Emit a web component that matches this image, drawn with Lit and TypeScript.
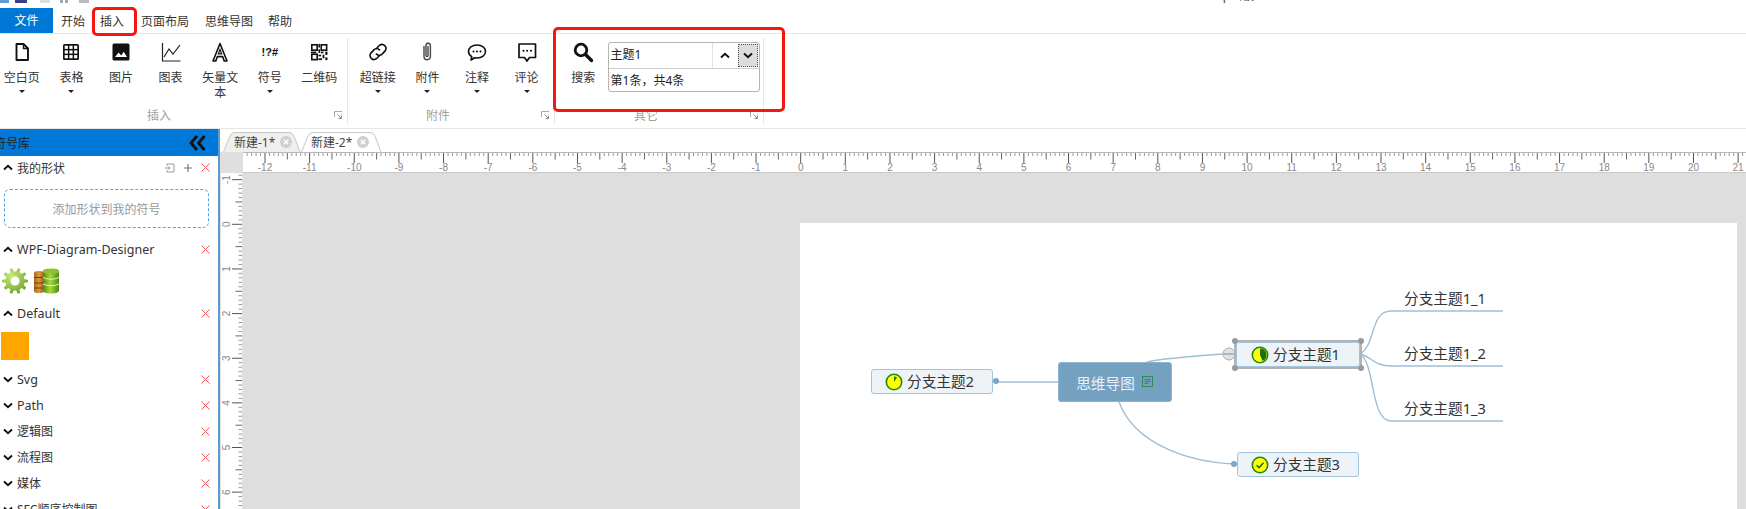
import { LitElement, html, css, svg } from "lit";
import { customElement } from "lit/decorators.js";

const ICONS: Record<string, unknown> = {
  page: svg`<path d="M6.500 4h7l4.500 4.500V20H6.500z" fill="none" stroke="#111" stroke-width="1.900" stroke-linejoin="round"/><path d="M13.500 4v4.500H18" fill="none" stroke="#111" stroke-width="1.400"/>`,
  table: svg`<rect x="4" y="4" width="16" height="16" rx="1.500" fill="#111"/><g fill="#fff"><rect x="5.700" y="5.700" width="3.200" height="3.200"/><rect x="10.400" y="5.700" width="3.200" height="3.200"/><rect x="15.100" y="5.700" width="3.200" height="3.200"/><rect x="5.700" y="10.400" width="3.200" height="3.200"/><rect x="10.400" y="10.400" width="3.200" height="3.200"/><rect x="15.100" y="10.400" width="3.200" height="3.200"/><rect x="5.700" y="15.100" width="3.200" height="3.200"/><rect x="10.400" y="15.100" width="3.200" height="3.200"/><rect x="15.100" y="15.100" width="3.200" height="3.200"/></g>`,
  image: svg`<rect x="3.500" y="3.500" width="17" height="17" rx="1.500" fill="#111"/><path d="M6 17l3.600-4.600 2.600 3 2.600-3.600L18 17z" fill="#fff"/>`,
  chart: svg`<path d="M3.500 3v18h18" fill="none" stroke="#222" stroke-width="1.200"/><path d="M5 17l5-8 4 5 7-9" fill="none" stroke="#222" stroke-width="1.200"/>`,
  vector: svg`<path d="M12 3.500L5 21h2.800l1.600-4.400h5.200L16.200 21H19z" fill="none" stroke="#111" stroke-width="1.600" stroke-linejoin="round"/><path d="M10.400 13.800L12 9.400l1.600 4.400z" fill="none" stroke="#111" stroke-width="1.200"/>`,
  qr: svg`<g transform="translate(1.200 1.200) scale(.9)"><g fill="none" stroke="#111" stroke-width="1.800"><rect x="4" y="4" width="6" height="6"/><rect x="14.500" y="4" width="6" height="6"/><rect x="4" y="14.500" width="6" height="6"/></g><g fill="#111"><rect x="11.400" y="3" width="1.800" height="4"/><rect x="11.400" y="9" width="1.800" height="4"/><rect x="3" y="11.600" width="6" height="1.800"/><rect x="14" y="11.600" width="3" height="1.800"/><rect x="19" y="11.600" width="2.400" height="3.600"/><rect x="11.400" y="15" width="3" height="1.800"/><rect x="16" y="15" width="2" height="4"/><rect x="11.400" y="19" width="4" height="2"/><rect x="19" y="18" width="2.400" height="3"/></g></g>`,
  link: svg`<g fill="none" stroke="#111" stroke-width="1.600" stroke-linecap="round"><path d="M10.500 8.500l3-3.200a4 4 0 0 1 5.600 5.600l-3 3.200a4 4 0 0 1-5.600 0"/><path d="M13.500 15.500l-3 3.200a4 4 0 0 1-5.600-5.600l3-3.200a4 4 0 0 1 5.600 0"/></g>`,
  clip: svg`<path d="M9 7v10a3.200 3.200 0 0 0 6.400 0V6a2.200 2.200 0 0 0-4.400 0v10a1 1 0 0 0 2 0V7" transform="translate(0 -0.5)" fill="none" stroke="#444" stroke-width="1.400" stroke-linecap="round"/>`,
  note: svg`<path d="M12 5c5 0 8.500 2.800 8.500 6.500S17 18 12 18c-.8 0-1.600-.1-2.300-.2L6 20l.8-3.400C4.700 15.400 3.500 13.600 3.500 11.500 3.500 7.800 7 5 12 5z" fill="none" stroke="#111" stroke-width="1.600" stroke-linejoin="round"/><circle cx="8.500" cy="11.500" r="1"/><circle cx="12" cy="11.500" r="1"/><circle cx="15.500" cy="11.500" r="1"/>`,
  comment: svg`<path d="M4 4h16.500v13.500h-6L12 21l-2.500-3.500H4z" fill="none" stroke="#111" stroke-width="1.700" stroke-linejoin="round"/><circle cx="8.500" cy="10.800" r="1"/><circle cx="12.200" cy="10.800" r="1"/><circle cx="16" cy="10.800" r="1"/>`,
  search: svg`<circle cx="10" cy="10" r="5.800" fill="none" stroke="#111" stroke-width="2.800"/><path d="M14.500 14.500L20.500 20.500" stroke="#111" stroke-width="3.400" stroke-linecap="round"/>`,
};

const icon = (name: string) => html`<svg class="ico" viewBox="0 0 24 24">${ICONS[name]}</svg>`;

const chevron = (up: boolean) =>
  html`<svg class="chev" viewBox="0 0 10 7"><path d=${up ? "M1 5.500L5 1.800L9 5.500" : "M1 1.500L5 5.200L9 1.500"} fill="none" stroke="#111" stroke-width="1.900"/></svg>`;

const redX = html`<svg class="rx" viewBox="0 0 10 10"><path d="M.5 .5L9.500 9.500M9.500 .5L.5 9.500" stroke="#f4555f" stroke-width="1.100"/></svg>`;

const launcher = html`<svg class="launch" viewBox="0 0 9 9"><path d="M.5 6V.5H8" fill="none" stroke="#aaa"/><path d="M3.500 3.500L7 7M7.500 4.500V7.500H4.500" fill="none" stroke="#888"/></svg>`;

const UNIT = 44.64;

function gearPath() {
  const teeth = 10;
  const pts: string[] = [];
  for (let i = 0; i < teeth; i++) {
    const a = (i / teeth) * Math.PI * 2;
    const step = (Math.PI * 2) / teeth;
    const corners: [number, number][] = [
      [a - step * 0.3, 9.6],
      [a - step * 0.16, 13],
      [a + step * 0.16, 13],
      [a + step * 0.3, 9.6],
    ];
    for (const [t, r] of corners) pts.push(`${(13 + r * Math.cos(t)).toFixed(2)} ${(13 + r * Math.sin(t)).toFixed(2)}`);
  }
  return "M" + pts.join("L") + "Z";
}

function hRuler() {
  const W = 1503;
  const marks = [];
  for (let i = -140; i <= 230; i++) {
    const x = 22 + ((i + 120) * UNIT) / 10;
    if (x < 0 || x > W) continue;
    const main = i % 10 === 0;
    const half = !main && i % 5 === 0;
    const y2 = main ? 11 : half ? 7.5 : 4;
    const c = main ? "#555" : half ? "#666" : "#999";
    marks.push(svg`<line x1=${x} x2=${x} y1="1" y2=${y2} stroke=${c} stroke-width="1"/>`);
    if (main) marks.push(svg`<text x=${x} y="19" class="rt" text-anchor="middle">${i / 10}</text>`);
  }
  return html`<svg class="hr" width=${W} height="21" viewBox="0 0 ${W} 21">
    <line x1="0" x2=${W} y1=".5" y2=".5" stroke="#b8b8b8"/>
    <line x1="0" x2=${W} y1="20.500" y2="20.500" stroke="#c9c9c9"/>
    ${marks}
  </svg>`;
}

function vRuler() {
  const H = 337;
  const marks = [];
  for (let i = -20; i <= 80; i++) {
    const y = 51.3 + (i * UNIT) / 10;
    if (y < 0 || y > H) continue;
    const main = i % 10 === 0;
    const half = !main && i % 5 === 0;
    const x1 = main ? 11 : half ? 14.5 : 17.5;
    const c = main ? "#555" : half ? "#666" : "#999";
    marks.push(svg`<line x1=${x1} x2="21" y1=${y} y2=${y} stroke=${c} stroke-width="1"/>`);
    if (main) marks.push(svg`<text class="rt" text-anchor="middle" transform="translate(9 ${y}) rotate(-90)">${i / 10}</text>`);
  }
  return html`<svg class="vr" width="21" height=${H} viewBox="0 0 21 ${H}">${marks}</svg>`;
}

const progress = (kind: string) => html`<svg class="prog" viewBox="0 0 18 18">
  <circle cx="9" cy="9" r="7.700" fill="#ffff00" stroke="#1f8a12" stroke-width="1.600"/>
  ${kind === "low" ? svg`<path d="M9 9V3.500A5.500 5.500 0 0 1 12 4.400z" fill="#1f7a12"/>` : ""}
  ${kind === "mid" ? svg`<path d="M9 9V2.600A6.400 6.400 0 0 1 11.500 14.900z" fill="#1f6a12"/>` : ""}
  ${kind === "done" ? svg`<path d="M5.500 9.300L8 11.600L12.600 6.800" fill="none" stroke="#1f6a12" stroke-width="1.500"/>` : ""}
</svg>`;

/* Map nodes: positions on the free page canvas (page origin = 800,223). */
const OX = 800;
const OY = 223;
const NODES = [
  { t: "分支主题2", p: "low", x: 871, y: 369, w: 122, h: 25 },
  { t: "分支主题1", p: "mid", x: 1236, y: 342, w: 124, h: 25 },
  { t: "分支主题3", p: "done", x: 1237, y: 452, w: 122, h: 25 },
];
const LEAVES = [
  { t: "分支主题1_1", y: 311 },
  { t: "分支主题1_2", y: 366 },
  { t: "分支主题1_3", y: 421 },
];

const at = (x: number, y: number, w?: number, h?: number) =>
  `left:${x - OX}px;top:${y - OY}px;` + (w ? `width:${w}px;` : "") + (h ? `height:${h}px;` : "");

@customElement("app-root")
export class AppRoot extends LitElement {
  static styles = css`
    :host {
      display: block;
      position: relative;
      width: 1746px;
      height: 509px;
      overflow: hidden;
      background: #fff;
      color: #333;
      font-family: "Noto Sans", "Noto Sans CJK SC", sans-serif;
      font-size: 12px;
    }
    .titlebar { height: 8px; position: relative; overflow: hidden; display: flex; }
    .qa { display: flex; height: 3px; }
    .qa i { display: block; height: 3px; }
    .q1 { width: 9px; background: #5a9ed8; }
    .q2 { width: 12px; margin-left: 6px; background: #3c3c8c; }
    .q3 { width: 10px; margin-left: 13px; background: #ddd; }
    .q4 { width: 3px; margin-left: 10px; background: #9ab; }
    .q5 { width: 3px; margin-left: 2px; background: #9ab; }
    .q6 { width: 10px; margin-left: 11px; background: #bbb; }
    .wintitle {
      position: absolute;
      left: 1176px;
      top: -13px;
      line-height: 17px;
      font-size: 12px;
      color: #444;
      white-space: nowrap;
    }
    .menu {
      height: 25px;
      display: flex;
      align-items: center;
      border-bottom: 1px solid #e6e6e6;
    }
    .file {
      width: 53px;
      height: 25px;
      line-height: 25px;
      background: #0078d7;
      color: #fff;
      text-align: center;
      margin-right: 8px;
    }
    .menu span { white-space: nowrap; }
    .m1 { width: 39px; }
    .m2 { width: 41px; }
    .m3 { width: 64px; }
    .m4 { width: 63px; }
    .ribbon {
      height: 94px;
      display: flex;
      margin-left: -3px;
      border-bottom: 1px solid #e6e6e6;
    }
    .group {
      display: flex;
      flex-direction: column;
      margin-top: 4px;
      margin-bottom: 4px;
      border-right: 1px solid #e6e6e6;
    }
    .g1 { width: 350px; }
    .g2 { width: 206px; }
    .g3 { width: 208px; }
    .btns { flex: 1; display: flex; }
    .g2 .btns { padding-left: 5px; }
    .g3 .btns { padding-left: 4px; }
    .btn {
      width: 49.6px;
      display: flex;
      flex-direction: column;
      align-items: center;
      padding-top: 2px;
    }
    .g3 .btn { width: 48.6px; }
    .ico { width: 24px; height: 24px; flex: none; display: block; }
    .sym {
      height: 24px;
      line-height: 24px;
      font-weight: 700;
      font-size: 11px;
      color: #111;
      font-family: "Liberation Sans", sans-serif;
    }
    .lbl {
      margin-top: 6px;
      width: 38px;
      text-align: center;
      line-height: 15px;
      color: #333;
    }
    .arrow {
      margin-top: 5px;
      width: 0;
      height: 0;
      border-left: 3px solid transparent;
      border-right: 3px solid transparent;
      border-top: 3px solid #222;
    }
    .glabel { height: 16px; display: flex; align-items: center; padding-right: 4px; color: #a0a0a0; margin-bottom: 1px; }
    .glabel b { flex: 1; font-weight: 400; text-align: center; padding-right: 13px; }
    .launch { width: 9px; height: 9px; }
    .search {
      width: 152px;
      height: 50px;
      margin: 4px 0 0 0;
      border: 1px solid #b5b5b5;
      border-radius: 3px;
      box-sizing: border-box;
      display: flex;
      flex-direction: column;
    }
    .s-top { height: 25px; display: flex; border-bottom: 1px solid #cfcfcf; flex: none; }
    .s-input { flex: 1; border-right: 1px solid #e2e2e2; padding-left: 2px; line-height: 24px; color: #222; }
    .s-up { width: 25px; display: flex; align-items: center; justify-content: center; }
    .s-down {
      width: 20px;
      margin: 1px 1px 1px 0;
      background: #dcdcdc;
      border: 1px dotted #555;
      box-sizing: border-box;
      display: flex;
      align-items: center;
      justify-content: center;
    }
    .s-res { padding-left: 2px; line-height: 24px; color: #222; }
    .chev { width: 10px; height: 7px; display: block; flex: none; }
    .main { display: flex; height: 381px; }
    .side {
      width: 218px;
      flex: none;
      border-right: 2px solid #5b9bd5;
      overflow: hidden;
    }
    .side-h {
      height: 27px;
      background: #0078d7;
      display: flex;
      align-items: center;
      justify-content: space-between;
      padding-right: 12px;
      color: #222;
    }
    .side-h span { margin-left: -6px; }
    .dbl { width: 17px; height: 16px; display: block; }
    .row {
      height: 26px;
      display: flex;
      align-items: center;
      padding: 0 8px 0 3px;
      gap: 4px;
      color: #333;
    }
    .row.first { height: 23px; }
    .row b { flex: 1; font-weight: 400; white-space: nowrap; }
    .row b.lat { font-size: 12.5px; }
    .rx { width: 9px; height: 9px; display: block; }
    .act { display: flex; align-items: center; gap: 8px; margin-right: 4px; }
    .act svg { display: block; width: 10px; height: 10px; }
    .drop {
      margin: 10px 9px 8px 4px;
      height: 37px;
      border: 1px dashed #4ea4ea;
      border-radius: 6px;
      color: #999;
      display: flex;
      align-items: center;
      justify-content: center;
    }
    .shapes { height: 38px; display: flex; align-items: center; gap: 6px; padding-left: 2px; }
    .shapes svg { display: block; }
    .swatch-wrap { padding: 6px 0; }
    .swatch { width: 28px; height: 28px; background: #ffa500; margin-left: 1px; }
    .work { flex: 1; min-width: 0; display: flex; flex-direction: column; }
    .tabs { height: 23px; display: flex; align-items: flex-end; padding-left: 3px; flex: none; }
    .tab {
      position: relative;
      z-index: 0;
      height: 20px;
      width: 78px;
      display: flex;
      align-items: center;
      gap: 5px;
      padding-left: 11px;
      box-sizing: border-box;
      color: #444;
      white-space: nowrap;
    }
    .tab.t2 { width: 81px; padding-left: 10px; }
    .tab-bg { position: absolute; left: 0; top: 0; z-index: -1; }
    .tx { width: 12px; height: 12px; display: block; flex: none; }
    .rulers { display: flex; height: 21px; flex: none; background: #fff; }
    .corner { width: 23px; background: #dfdfdf; flex: none; }
    .hr { display: block; flex: none; }
    .rt { font-size: 10px; fill: #888; font-family: "Liberation Sans", sans-serif; }
    .lower { flex: 1; min-height: 0; display: flex; }
    .vwrap { width: 23px; flex: none; background: #dfdfdf; display: flex; justify-content: flex-end; overflow: hidden; }
    .vr { display: block; background: #fff; flex: none; margin-right: 1px; }
    .canvas { flex: 1; position: relative; background: #dedede; overflow: hidden; }
    .paper { position: absolute; left: 557px; top: 50px; width: 937px; height: 400px; background: #fff; }
    .links { position: absolute; left: 0; top: 0; }
    .node {
      position: absolute;
      box-sizing: border-box;
      display: flex;
      align-items: center;
      justify-content: center;
      gap: 4px;
      padding: 0 5px 2px 0;
      background: #eef3f7;
      border: 1px solid #a3c3da;
      border-radius: 3px;
      font-size: 14.67px;
      color: #333;
      white-space: nowrap;
    }
    .prog { width: 18px; height: 18px; display: block; flex: none; position: relative; top: 1px; }
    .root {
      position: absolute;
      box-sizing: border-box;
      display: flex;
      align-items: center;
      justify-content: center;
      gap: 7px;
      background: #75a1c0;
      border: 1px solid #8fb4ce;
      border-radius: 3px;
      color: #e8f1f7;
      font-size: 14.67px;
      white-space: nowrap;
    }
    .notei { width: 12px; height: 12px; display: block; }
    .leaf {
      position: absolute;
      font-size: 14.67px;
      line-height: 20px;
      color: #333;
      white-space: nowrap;
    }
    .sel {
      position: absolute;
      box-sizing: border-box;
      border: 2px solid #b2b2b2;
    }
    .h {
      position: absolute;
      width: 6px;
      height: 6px;
      border-radius: 50%;
      background: #999;
    }
    .h.tl { left: -4px; top: -4px; }
    .h.tr { right: -4px; top: -4px; }
    .h.bl { left: -4px; bottom: -4px; }
    .h.br { right: -4px; bottom: -4px; }
    .mark {
      position: absolute;
      box-sizing: border-box;
      border: 3px solid #f5170f;
      border-radius: 5px;
      pointer-events: none;
    }
    .mark.a { left: 92px; top: 7px; width: 45px; height: 29px; }
    .mark.b { left: 553px; top: 27px; width: 232px; height: 85px; }
  `;

  private rbtn(ic: string, label: string, arrow = false) {
    return html`<div class="btn">
      ${ic === "sym" ? html`<div class="sym">!?#</div>` : icon(ic)}
      <div class="lbl">${label}</div>
      ${arrow ? html`<div class="arrow"></div>` : ""}
    </div>`;
  }

  private row(title: string, open: boolean, latin = false) {
    return html`<div class="row">${chevron(open)}<b class=${latin ? "lat" : ""}>${title}</b>${redX}</div>`;
  }

  private tab(label: string, cls: string, w: number, fill: string) {
    return html`<div class="tab ${cls}">
      <svg class="tab-bg" width=${w} height="20" viewBox="0 0 ${w} 20">
        <path d="M.5 20L7 4Q8.500 .5 12 .5H${w - 12}Q${w - 8.5} .5 ${w - 7} 4L${w - 1} 20" fill=${fill} stroke="#c6c6c6"/>
      </svg>
      <span>${label}</span>
      <svg class="tx" viewBox="0 0 12 12"><circle cx="6" cy="6" r="6" fill="#cfcfcf"/><path d="M3.800 3.800L8.200 8.200M8.200 3.800L3.800 8.200" stroke="#fff" stroke-width="1.500"/></svg>
    </div>`;
  }

  render() {
    const P = (x: number, y: number) => `${x - OX} ${y - OY}`;
    return html`
      <div class="titlebar">
        <div class="qa"><i class="q1"></i><i class="q2"></i><i class="q3"></i><i class="q4"></i><i class="q5"></i><i class="q6"></i></div>
        <div class="wintitle">Mindmap画板</div>
      </div>
      <div class="menu">
        <div class="file">文件</div>
        <span class="m1">开始</span><span class="m2">插入</span><span class="m3">页面布局</span><span class="m4">思维导图</span><span>帮助</span>
      </div>
      <div class="ribbon">
        <div class="group g1">
          <div class="btns">
            ${this.rbtn("page", "空白页", true)}
            ${this.rbtn("table", "表格", true)}
            ${this.rbtn("image", "图片")}
            ${this.rbtn("chart", "图表")}
            ${this.rbtn("vector", "矢量文本")}
            ${this.rbtn("sym", "符号", true)}
            ${this.rbtn("qr", "二维码")}
          </div>
          <div class="glabel"><b>插入</b>${launcher}</div>
        </div>
        <div class="group g2">
          <div class="btns">
            ${this.rbtn("link", "超链接", true)}
            ${this.rbtn("clip", "附件", true)}
            ${this.rbtn("note", "注释", true)}
            ${this.rbtn("comment", "评论", true)}
          </div>
          <div class="glabel"><b>附件</b>${launcher}</div>
        </div>
        <div class="group g3">
          <div class="btns">
            ${this.rbtn("search", "搜索")}
            <div class="search">
              <div class="s-top">
                <div class="s-input">主题1</div>
                <div class="s-up">${chevron(true)}</div>
                <div class="s-down">${chevron(false)}</div>
              </div>
              <div class="s-res">第1条，共4条</div>
            </div>
          </div>
          <div class="glabel"><b>其它</b>${launcher}</div>
        </div>
      </div>
      <div class="main">
        <div class="side">
          <div class="side-h">
            <span>符号库</span>
            <svg class="dbl" viewBox="0 0 17 16"><path d="M8 1L2 8l6 7M15.500 1L9.500 8l6 7" fill="none" stroke="#111" stroke-width="2.800"/></svg>
          </div>
          <div class="row first">
            ${chevron(true)}<b>我的形状</b>
            <div class="act">
              <svg viewBox="0 0 10 10"><path d="M2 3V1h7v8H2V7M0 5h5M3.500 3.500L5.200 5L3.500 6.500" fill="none" stroke="#999"/></svg>
              <svg viewBox="0 0 10 10"><path d="M5 1v8M1 5h8" stroke="#777" stroke-width="1.200"/></svg>
            </div>
            ${redX}
          </div>
          <div class="drop">添加形状到我的符号</div>
          ${this.row("WPF-Diagram-Designer", true, true)}
          <div class="shapes">
            <svg width="26" height="26" viewBox="0 0 26 26">
              <defs>
                <radialGradient id="gg" cx="35%" cy="30%" r="85%"><stop offset="0" stop-color="#cdea78"/><stop offset="1" stop-color="#5f9a28"/></radialGradient>
                <linearGradient id="dbg" x1="0" x2="1" y1="0" y2="0"><stop offset="0" stop-color="#4f8c14"/><stop offset=".45" stop-color="#a9d83c"/><stop offset="1" stop-color="#4e8a14"/></linearGradient>
                <linearGradient id="dbo" x1="0" x2="1" y1="0" y2="0"><stop offset="0" stop-color="#a8661c"/><stop offset=".5" stop-color="#dd9a42"/><stop offset="1" stop-color="#9a5c16"/></linearGradient>
              </defs>
              <path d=${gearPath()} fill="url(#gg)"/>
              <circle cx="13" cy="13" r="4.500" fill="#fff"/>
            </svg>
            <svg width="26" height="26" viewBox="0 0 26 26">
              <path d="M0 5q0-2 5-2t5 2v18q0 2-5 2t-5-2z" fill="url(#dbo)"/>
              <path d="M0 9.500h10M0 15h10M0 20h10" stroke="#6e400c" stroke-width="1.200"/>
              <path d="M9 3.500q0-3 8-3t8 3v19q0 3-8 3t-8-3z" fill="url(#dbg)"/>
              <ellipse cx="17" cy="3.500" rx="8" ry="2.500" fill="#8cc22e"/>
              <path d="M9 9.500q8 3.500 16 0M9 16q8 3.500 16 0" fill="none" stroke="#e4f4b0" stroke-width="1"/>
            </svg>
          </div>
          ${this.row("Default", true, true)}
          <div class="swatch-wrap"><div class="swatch"></div></div>
          ${[
            ["Svg", true],
            ["Path", true],
            ["逻辑图", false],
            ["流程图", false],
            ["媒体", false],
            ["SFC顺序控制图", false],
          ].map(([t, l]) => this.row(t as string, false, l as boolean))}
        </div>
        <div class="work">
          <div class="tabs">
            ${this.tab("新建-1*", "t1", 78, "#efefef")}
            ${this.tab("新建-2*", "t2", 81, "#ffffff")}
          </div>
          <div class="rulers"><div class="corner"></div>${hRuler()}</div>
          <div class="lower">
            <div class="vwrap">${vRuler()}</div>
            <div class="canvas">
              <div class="paper">
                <svg class="links" width="937" height="400" viewBox="0 0 937 400">
                  <g fill="none" stroke="#a0bfd6" stroke-width="1.400">
                    <path d="M${P(996, 382)}H${258}"/>
                    <path d="M${P(1147, 362)}C${P(1165, 358)} ${P(1195, 356)} ${P(1223, 354)}"/>
                    <path d="M${P(1119, 402)}C${P(1135, 445)} ${P(1190, 462)} ${P(1234, 464)}"/>
                    <path d="M${P(1360, 354)}C${P(1376, 345)} ${P(1370, 311)} ${P(1391, 311)}H${703}"/>
                    <path d="M${P(1360, 354)}C${P(1372, 357)} ${P(1374, 366)} ${P(1391, 366)}H${703}"/>
                    <path d="M${P(1360, 354)}C${P(1376, 365)} ${P(1370, 421)} ${P(1391, 421)}H${703}"/>
                  </g>
                  <circle cx=${996 - OX} cy=${381 - OY} r="3" fill="#7ba6c6"/>
                  <circle cx=${1234 - OX} cy=${464 - OY} r="3" fill="#7ba6c6"/>
                  <circle cx=${1229 - OX} cy=${354 - OY} r="6" fill="#e2e2e2" stroke="#aaa"/>
                  <path d="M${P(1224, 354)}h10" stroke="#888"/>
                </svg>
                <div class="root" style=${at(1058, 362, 114, 40)}>
                  <span>思维导图</span>
                  <svg class="notei" viewBox="0 0 12 12"><rect x=".5" y=".5" width="10" height="10" fill="none" stroke="#2e8b57"/><path d="M2.500 3.500h6M2.500 5.500h6M2.500 7.500h4" stroke="#2e8b57"/></svg>
                </div>
                <div class="sel" style=${at(1234, 340, 128, 29)}>
                  <i class="h tl"></i><i class="h tr"></i><i class="h bl"></i><i class="h br"></i>
                </div>
                ${NODES.map(
                  (n) => html`<div class="node" style=${at(n.x, n.y, n.w, n.h)}>${progress(n.p)}<span>${n.t}</span></div>`
                )}
                ${LEAVES.map((l) => html`<div class="leaf" style=${at(1404, l.y - 23)}>${l.t}</div>`)}
              </div>
            </div>
          </div>
        </div>
      </div>
      <div class="mark a"></div>
      <div class="mark b"></div>
    `;
  }
}
